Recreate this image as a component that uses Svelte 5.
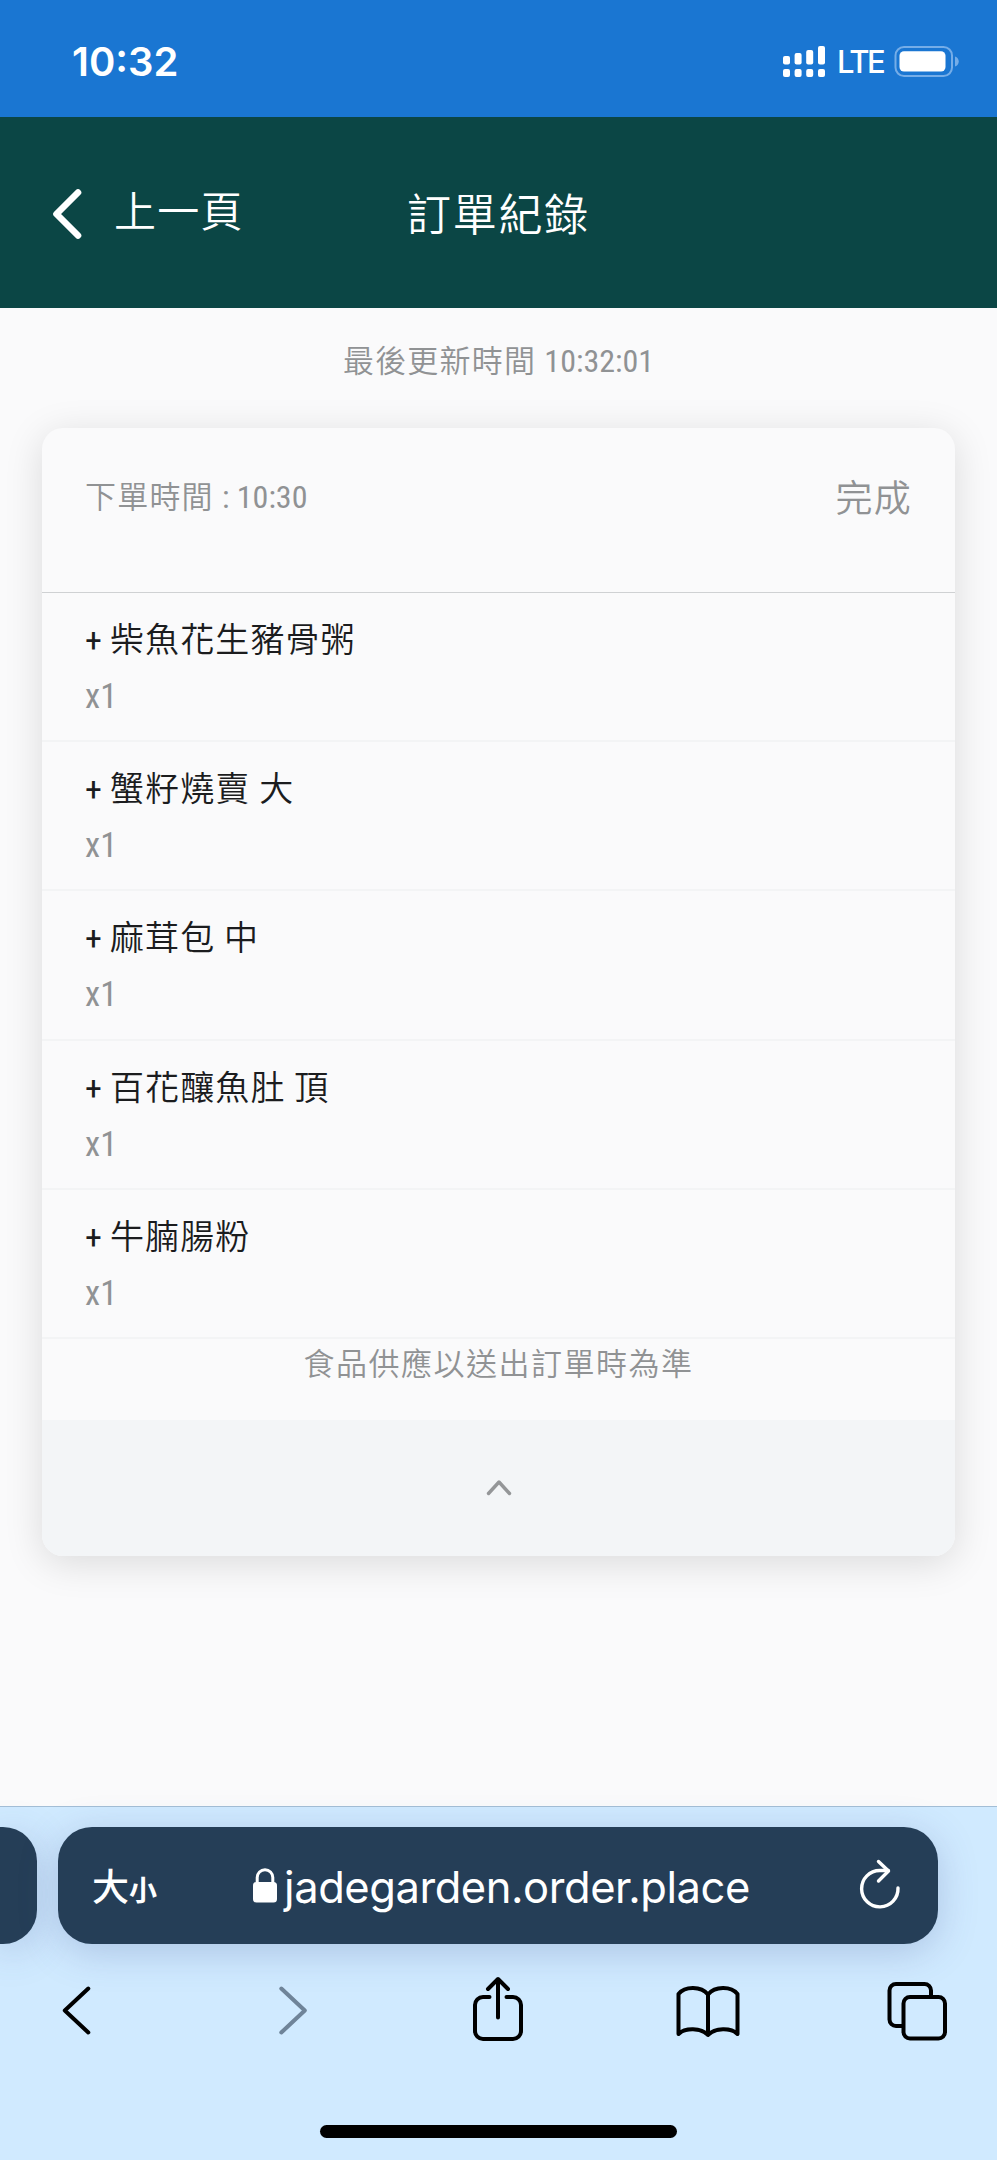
<script lang="ts">
  interface OrderItem {
    name: string;
    qty: number;
  }

  const lastUpdate = "10:32:01";
  const orderTime = "10:30";
  const items: OrderItem[] = [
    { name: "柴魚花生豬骨粥", qty: 1 },
    { name: "蟹籽燒賣 大", qty: 1 },
    { name: "麻茸包 中", qty: 1 },
    { name: "百花釀魚肚 頂", qty: 1 },
    { name: "牛腩腸粉", qty: 1 },
  ];

  let open = $state(true);
</script>

<div class="screen">
  <div class="status">
    <span class="clock">10:32</span>
    <svg class="signal" width="42" height="31" viewBox="0 0 42 31" fill="#fff">
      <rect x="0" y="10" width="7" height="8.5" rx="2" />
      <rect x="11.6" y="7" width="7" height="11.5" rx="2" />
      <rect x="23.2" y="4" width="7" height="14.5" rx="2" />
      <rect x="35" y="0" width="7" height="18.5" rx="2" />
      <rect x="0" y="23" width="7" height="8" rx="2" />
      <rect x="11.6" y="23" width="7" height="8" rx="2" />
      <rect x="23.2" y="23" width="7" height="8" rx="2" />
      <rect x="35" y="23" width="7" height="8" rx="2" />
    </svg>
    <span class="network">LTE</span>
    <svg class="battery" width="66" height="31" viewBox="0 0 66 31">
      <rect x="2.500" y="1" width="56.5" height="29" rx="8.5" fill="none" stroke="#75ade8" stroke-width="2" />
      <rect x="6.500" y="5.2" width="46" height="20.3" rx="4.5" fill="#fff" />
      <path d="M62 10.5c5 1.500 5 8.500 0 10z" fill="#75ade8" />
    </svg>
  </div>

  <header>
    <button class="back">
      <svg width="30" height="52" viewBox="0 0 30 52" fill="none" stroke="#fff" stroke-width="6.600" stroke-linecap="round" stroke-linejoin="round">
        <path d="M26 4.500 4.500 26 26 47.500" />
      </svg>
      <span>上一頁</span>
    </button>
    <h1>訂單紀錄</h1>
  </header>

  <main>
    <p class="updated">最後更新時間 <span class="digits">{lastUpdate}</span></p>

    <section class="card">
      <div class="card-head">
        <span class="order-time">下單時間 <span class="digits">: {orderTime}</span></span>
        <span class="state">完成</span>
      </div>
      {#if open}
        <ul>
          {#each items as item}
            <li>
              <div class="name"><span class="plus">+</span>{item.name}</div>
              <div class="qty">x{item.qty}</div>
            </li>
          {/each}
        </ul>
        <p class="note">食品供應以送出訂單時為準</p>
      {/if}
      <button class="toggle" aria-label="toggle" onclick={() => (open = !open)}>
        <svg class:flipped={!open} width="26" height="18" viewBox="0 0 26 18" fill="none" stroke="#949698" stroke-width="3.400" stroke-linecap="round" stroke-linejoin="round">
          <path d="M2.500 14.500 13 3 23.500 14.500" />
        </svg>
      </button>
    </section>
  </main>

  <footer>
    <div class="tabs">
      <div class="tab previous"></div>
      <div class="tab current">
        <span class="size"><span class="big">大</span><span class="small">小</span></span>
        <span class="address">
          <svg width="24" height="35" viewBox="0 0 24 35">
            <path d="M4.200 16V9.500a7.800 7.800 0 0 1 15.600 0V16" fill="none" stroke="#fff" stroke-width="3" />
            <rect x="0" y="14" width="24" height="20.500" rx="3.500" fill="#fff" />
          </svg>
          <span class="domain">jadegarden.order.place</span>
        </span>
        <svg class="reload" width="42" height="50" viewBox="0 0 42 50" fill="none" stroke="#fff" stroke-width="3.400" stroke-linecap="round" stroke-linejoin="round">
          <path d="M39 29A18.200 18.200 0 1 1 20.800 11.500h8.500" />
          <path d="M19.500 2.500 29.500 12 19.500 22" />
        </svg>
      </div>
    </div>

    <nav>
      <svg viewBox="0 0 72 72" stroke="#000">
        <path d="M46.300 13.500 22.800 35.500 46.300 57.500" />
      </svg>
      <svg viewBox="0 0 72 72" stroke="#6f8499">
        <path d="M29.300 13.500 52.800 35.500 29.300 57.500" />
      </svg>
      <svg viewBox="0 0 72 72" stroke="#000">
        <path d="M28.500 22h-6.500a8 8 0 0 0-8 8V56a8 8 0 0 0 8 8H52a8 8 0 0 0 8-8V30a8 8 0 0 0-8-8H45.500" />
        <path d="M37 42.500V5M27 14 37 4 47 14" />
      </svg>
      <svg viewBox="0 0 72 72" stroke="#000">
        <path d="M37 19.500C30 11 14 11 7.500 19V59C14 52.500 30 52.500 37 60C44 52.500 60 52.500 66.500 59V19C60 11 44 11 37 19.500V60" />
      </svg>
      <svg viewBox="0 0 72 72" stroke="#000">
        <path d="M22.500 51H16a6.500 6.500 0 0 1-6.500-6.500V15.500A6.500 6.500 0 0 1 16 9H44.500a6.500 6.500 0 0 1 6.500 6.500V21" />
        <rect x="23.500" y="22" width="41.500" height="41.500" rx="6.500" />
      </svg>
    </nav>

    <div class="home-indicator"></div>
  </footer>
</div>

<style>
  :global(body) {
    background: #fafafb;
  }

  .screen {
    width: 997px;
    height: 2160px;
    display: flex;
    flex-direction: column;
    overflow: hidden;
    background: #fafafb;
    font-family: "Roboto Condensed", Roboto, "Noto Sans CJK TC", sans-serif;
    font-stretch: 75%;
    font-weight: 350;
    color: #909294;
  }

  button {
    border: none;
    background: none;
    padding: 0;
    font: inherit;
    color: inherit;
    cursor: pointer;
  }

  p,
  h1,
  ul {
    margin: 0;
    padding: 0;
  }

  svg {
    display: block;
    flex: none;
  }

  .status {
    height: 117px;
    box-sizing: border-box;
    padding: 46px 38px 0 72px;
    display: flex;
    align-items: flex-start;
    background: #1a76d2;
    color: #fff;
    font-family: Inter, sans-serif;
    font-stretch: normal;
  }

  .clock {
    margin-right: auto;
    font-size: 40px;
    font-weight: 600;
    line-height: 31px;
  }

  .network {
    width: 46px;
    margin: 0 10px 0 12px;
    font-size: 31px;
    font-weight: 500;
    line-height: 32px;
    letter-spacing: -2.4px;
    white-space: nowrap;
  }

  header {
    height: 191px;
    display: grid;
    grid-template-columns: 1fr auto 1fr;
    align-items: center;
    background: #0b4645;
    color: #fff;
  }

  .back {
    display: flex;
    align-items: center;
    gap: 32px;
    padding-left: 52px;
  }

  .back svg {
    margin-top: 2px;
  }

  .back span {
    font-size: 42px;
    line-height: 60px;
    letter-spacing: 1.2px;
  }

  h1 {
    padding-top: 6px;
    font-size: 44px;
    font-weight: 350;
    line-height: 60px;
    letter-spacing: 1.8px;
  }

  main {
    height: 1498px;
    padding: 0 42px;
    box-sizing: border-box;
  }

  .updated {
    height: 120px;
    box-sizing: border-box;
    padding-top: 31px;
    text-align: center;
    font-size: 31px;
    line-height: 44px;
    letter-spacing: 1.2px;
  }

  .digits {
    font-size: 32px;
    font-weight: 400;
    letter-spacing: 0;
  }

  .card {
    overflow: hidden;
    border-radius: 21px;
    background: #fafafb;
    box-shadow: 0 7px 38px rgba(0, 0, 0, 0.13);
  }

  .card-head {
    height: 165px;
    box-sizing: border-box;
    padding: 46px 43px 0;
    display: flex;
    justify-content: space-between;
    border-bottom: 1px solid #cfd1d3;
  }

  .order-time {
    font-size: 31px;
    line-height: 46px;
    letter-spacing: 1.2px;
  }

  .state {
    font-size: 37px;
    line-height: 51px;
    letter-spacing: 1.2px;
  }

  ul {
    list-style: none;
  }

  li {
    height: 149.200px;
    box-sizing: border-box;
    padding: 22px 43px 0;
    border-bottom: 2px solid #f3f4f5;
  }

  .name {
    font-size: 34px;
    line-height: 50px;
    letter-spacing: 1.1px;
    color: #1b1c1e;
  }

  .plus {
    margin-right: 7px;
    font-weight: 450;
  }

  .qty {
    padding-top: 7px;
    font-size: 34.5px;
    font-weight: 400;
    line-height: 48px;
    letter-spacing: 0;
  }

  .note {
    height: 81px;
    box-sizing: border-box;
    padding-top: 2px;
    text-align: center;
    font-size: 31px;
    line-height: 48px;
    letter-spacing: 1.5px;
  }

  .toggle {
    width: 100%;
    height: 136px;
    display: flex;
    align-items: center;
    justify-content: center;
    background: #f3f5f7;
  }

  .flipped {
    transform: rotate(180deg);
  }

  footer {
    flex: 1;
    box-sizing: border-box;
    border-top: 1px solid #a3bed6;
    padding-top: 20px;
    background: #d0eaff;
  }

  .tabs {
    display: flex;
    gap: 21px;
  }

  .tab {
    height: 117px;
    box-sizing: border-box;
    background: #253e57;
    box-shadow: 0 8px 38px rgba(70, 90, 150, 0.26);
  }

  .previous {
    width: 37px;
    border-radius: 0 34px 34px 0;
  }

  .current {
    width: 880px;
    border-radius: 34px;
    padding: 0 37px 0 34px;
    display: flex;
    align-items: center;
    justify-content: space-between;
    color: #fff;
  }

  .size {
    display: flex;
    align-items: baseline;
    padding-top: 2px;
    font-family: "Noto Sans CJK TC", sans-serif;
    font-weight: 500;
    line-height: 50px;
  }

  .big {
    font-size: 37px;
  }

  .small {
    font-size: 28px;
    font-weight: 700;
  }

  .address {
    display: flex;
    align-items: center;
    gap: 7px;
    margin-right: 13px;
  }

  .domain {
    padding-top: 2px;
    font-family: Inter, sans-serif;
    font-stretch: normal;
    font-weight: 400;
    font-size: 43.5px;
    line-height: 56px;
    letter-spacing: -0.45px;
  }

  .reload {
    margin-bottom: 4px;
  }

  nav {
    display: flex;
    justify-content: space-between;
    padding: 31px 45px 0 42px;
  }

  nav svg {
    width: 72px;
    height: 72px;
    fill: none;
    stroke-width: 4;
    stroke-linecap: round;
    stroke-linejoin: round;
  }

  .home-indicator {
    width: 357px;
    height: 13px;
    margin: 78px auto 0;
    border-radius: 7px;
    background: #000;
  }
</style>
